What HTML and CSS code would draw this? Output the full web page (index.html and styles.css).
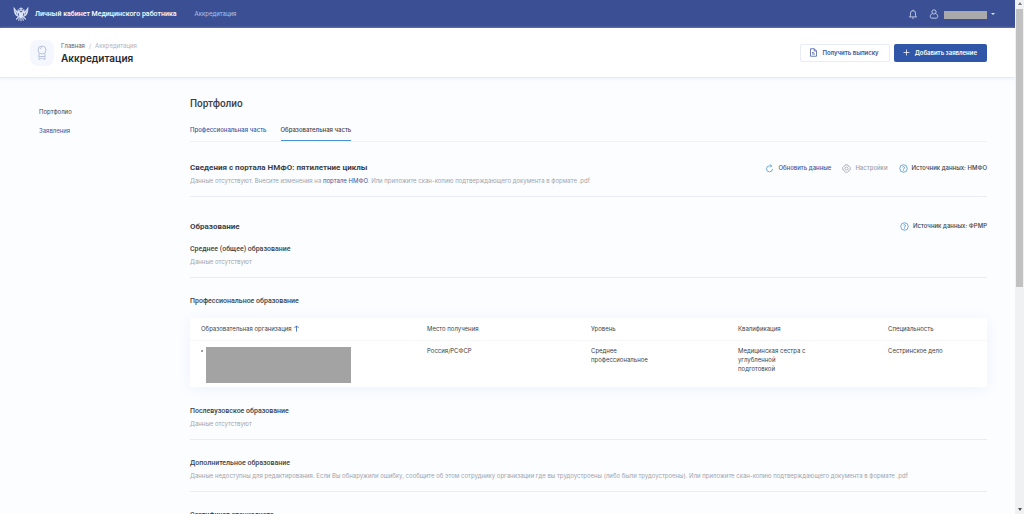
FILE: index.html
```html
<!DOCTYPE html>
<html lang="ru">
<head>
<meta charset="utf-8">
<title>Аккредитация</title>
<link rel="stylesheet" href="styles.css">
</head>
<body>
<div class="page">
  <header class="topbar">
    <svg class="emblem" viewBox="0 0 28 28" fill="none" stroke="currentColor" stroke-width="1.8" stroke-linecap="round">
      <path d="M14 3v4M11.500 5h5M9 6.500l2 2.500 3-1.500 3 1.500 2-2.500M8 9l3 2M20 9l-3 2"/>
      <path d="M11 12C7 12 5 8 2 4c0 7 1 12 7 14M17 12c4 0 6-4 9-8 0 7-1 12-7 14M5 8v5M7.500 11v5M23 8v5M20.500 11v5"/>
      <path d="M11 12h6v6l-3 3-3-3zM10 19l-4 4M18 19l4 4M14 21v5M11 21l-1 4M17 21l1 4" fill="currentColor"/>
    </svg>
    <span class="brand">Личный кабинет Медицинского работника</span>
    <nav class="topnav"><a href="#">Аккредитация</a></nav>
    <div class="user">
      <button class="icon-btn" aria-label="Уведомления">
        <svg viewBox="0 0 24 24" class="ico"><path d="M3 19h18M5 19v-2l1-2v-5a6 6 0 0 1 12 0v5l1 2v2M10 22h4M12 4V2"/></svg>
      </button>
      <button class="account" aria-label="Профиль">
        <svg viewBox="0 0 24 24" class="ico"><circle cx="12" cy="7" r="5"/><path d="M8 11c-3 1-5 4-5 7 0 3 2 4 4 4h10c2 0 4-1 4-4 0-3-2-6-5-7"/></svg>
        <span class="mask-name"></span>
        <span class="caret"></span>
      </button>
    </div>
  </header>

  <section class="titlebar">
    <span class="badge">
      <svg viewBox="0 0 24 32" class="ico"><circle cx="12" cy="10" r="8"/><path d="M8 8a5 5 0 0 1 4-3M6 17v12l6-3 6 3V17M6 23h12"/></svg>
    </span>
    <div class="titles">
      <nav class="crumbs"><a href="#">Главная</a><span>/</span><span>Аккредитация</span></nav>
      <h1>Аккредитация</h1>
    </div>
    <div class="actions">
      <button class="btn btn-light">
        <svg viewBox="0 0 24 24" class="ico"><path d="M4 2h10l6 6v14H4zM14 2v6h6M8 12h5M8 16h8"/></svg>
        Получить выписку
      </button>
      <button class="btn btn-primary">
        <svg viewBox="0 0 24 24" class="ico"><path d="M12 4v16M4 12h16"/></svg>
        Добавить заявление
      </button>
    </div>
  </section>

  <div class="body">
    <nav class="sidebar">
      <a class="current" href="#">Портфолио</a>
      <a href="#">Заявления</a>
    </nav>
    <main class="content">
      <h2>Портфолио</h2>
      <nav class="tabs">
        <a href="#">Профессиональная часть</a>
        <a class="active" href="#">Образовательная часть</a>
      </nav>

      <section class="block first">
        <div class="head">
          <h3>Сведения с портала НМФО: пятилетние циклы</h3>
          <div class="tools">
            <button class="tool refresh"><svg viewBox="0 0 24 24" class="ico"><path d="M20 13a8 8 0 1 1-8-8h5M14 1l4 4-4 4"/></svg>Обновить данные</button>
            <button class="tool muted"><svg viewBox="0 0 24 24" class="ico"><path d="M9 2h6l1 3 3 1 3 3v6l-3 1-1 3-3 3H9l-3-3-1-3-3-1V9l3-3 3-1z"/><circle cx="12" cy="12" r="4"/></svg>Настройки</button>
            <button class="tool source"><svg viewBox="0 0 24 24" class="ico"><circle cx="12" cy="12" r="10"/><path d="M9 9a3 3 0 1 1 3 4v2M12 17v2"/></svg>Источник данных: НМФО</button>
          </div>
        </div>
        <p>Данные отсутствуют. Внесите изменения на <a href="#">портале НМФО</a>. Или приложите скан-копию подтверждающего документа в формате .pdf</p>
      </section>

      <div class="head education">
        <h3>Образование</h3>
        <div class="tools">
          <button class="tool source"><svg viewBox="0 0 24 24" class="ico"><circle cx="12" cy="12" r="10"/><path d="M9 9a3 3 0 1 1 3 4v2M12 17v2"/></svg>Источник данных: ФРМР</button>
        </div>
      </div>
      <section class="block near">
        <h4>Среднее (общее) образование</h4>
        <p>Данные отсутствуют</p>
      </section>

      <section class="professional">
        <h4>Профессиональное образование</h4>
        <table>
          <thead>
            <tr>
              <th class="c-org">Образовательная организация
                <svg viewBox="0 0 16 16" class="ico sort"><path d="M8 15V2M3 7l5-5 5 5"/></svg></th>
              <th class="c-place">Место получения</th>
              <th class="c-level">Уровень</th>
              <th class="c-qual">Квалификация</th>
              <th>Специальность</th>
            </tr>
          </thead>
          <tbody>
            <tr>
              <td class="org"><div class="org-cell"><span class="dot"></span><span class="mask-org"></span></div></td>
              <td>Россия/РСФСР</td>
              <td>Среднее<br>профессиональное</td>
              <td>Медицинская сестра с<br>углубленной<br>подготовкой</td>
              <td>Сестринское дело</td>
            </tr>
          </tbody>
        </table>
      </section>

      <section class="block">
        <h4>Послевузовское образование</h4>
        <p>Данные отсутствуют</p>
      </section>
      <section class="block">
        <h4>Дополнительное образование</h4>
        <p>Данные недоступны для редактирования. Если Вы обнаружили ошибку, сообщите об этом сотруднику организации где вы трудоустроены (либо были трудоустроены). Или приложите скан-копию подтверждающего документа в формате .pdf</p>
      </section>
      <section class="block">
        <h4>Сертификат специалиста</h4>
      </section>
    </main>
  </div>
</div>
<div class="scrollbar" aria-hidden="true">
  <span class="arrow up"></span>
  <span class="thumb"></span>
  <span class="arrow down"></span>
</div>
</body>
</html>
```
FILE: styles.css
```css
* { box-sizing: border-box; }
body {
  margin: 0;
  display: flex;
  height: 100vh;
  overflow: hidden;
  background: #fcfdff;
  color: #3c3f47;
  font: 6px/12px Inter, "Noto Sans", sans-serif;
}
h1, h2, h3, h4, p { margin: 0; }
a { color: #3d559d; text-decoration: none; }
button {
  font: inherit;
  color: inherit;
  background: none;
  border: 0;
  padding: 0;
  display: flex;
  align-items: center;
}
.ico {
  width: 9px;
  height: 9px;
  flex: none;
  fill: none;
  stroke: currentColor;
  stroke-width: 2;
}

.page { flex: 1; min-width: 0; overflow: hidden; }

.topbar {
  display: flex;
  align-items: center;
  height: 28px;
  padding: 0 20px 0 13px;
  background: #3b5094;
  color: #fff;
}
.emblem { width: 16px; height: 16px; color: #dfe6fa; }
.brand { margin-left: 6px; font: 500 7px/12px Roboto, sans-serif; }
.topnav { margin-left: 18px; }
.topnav a { color: #b4c0e4; }
.user { display: flex; align-items: center; gap: 11px; margin-left: auto; color: #d5dcf1; }
.user .ico { width: 10px; height: 10px; }
.account { gap: 5px; }
.mask-name { width: 43px; height: 8px; margin-top: 2px; background: #a9a8aa; }
.caret {
  border: 2px solid transparent;
  border-top-color: #dfe5f6;
  border-bottom: 0;
  margin-left: -1px;
}

.titlebar {
  display: flex;
  align-items: center;
  height: 50px;
  padding: 0 28px 0 30px;
  background: #fff;
  border-bottom: 1px solid #e6ecf4;
  box-shadow: 0 1px 3px #eaf0f8;
}
.badge {
  display: flex;
  align-items: center;
  justify-content: center;
  width: 24px;
  height: 26px;
  border-radius: 8px;
  background: #f4f7fd;
  color: #b9c3dc;
}
.badge .ico { width: 12px; height: 16px; }
.titles { margin-left: 7px; }
.crumbs { display: flex; gap: 4px; line-height: 10px; color: #b0b3bc; }
.crumbs a { color: #5f636d; }
h1 { font-size: 10px; line-height: 14px; font-weight: 600; color: #26282f; }
.actions { display: flex; gap: 4px; margin-left: auto; }
.btn {
  height: 18px;
  padding: 0 10px 0 8px;
  gap: 4px;
  border-radius: 2px;
  font-weight: 600;
}
.btn-light { border: 1px solid #e8edf5; color: #3d559d; }
.btn-primary { background: #3056a8; color: #fff; }

.body { display: flex; padding: 18px 28px 0 39px; }
.sidebar { display: flex; flex-direction: column; gap: 7px; width: 151px; padding-top: 10px; }
.sidebar .current { color: #3c3f47; }
.content { flex: 1; min-width: 0; }

h2 { font: 500 10px/16px Roboto, sans-serif; }
.tabs { display: flex; gap: 14px; margin-top: 12px; border-bottom: 1px solid #edf1f8; }
.tabs a { padding-bottom: 4px; border-bottom: 1px solid transparent; font-weight: 500; }
.tabs .active { color: #44413f; border-color: #4c93d6; }

.head { display: flex; align-items: center; justify-content: space-between; }
h3 { font: 700 8px/14px Roboto, sans-serif; }
h4 { font: 500 7px/14px Roboto, sans-serif; }
.tools { display: flex; gap: 11px; }
.tool { gap: 4px; font-weight: 500; }
.tool .ico { color: #4a8fce; }
.refresh { color: #3d559d; }
.muted, .muted .ico { color: #9b9fa8; }

.block { padding: 16px 0 9px; border-bottom: 1px solid #e9edf3; }
.block p { color: #a0a4ad; }
.first { padding-top: 19px; }
.near { padding-top: 8px; }
.education { margin-top: 23px; align-items: flex-start; }
.professional { padding: 16px 0 1px; }

table {
  width: 100%;
  margin-top: 10px;
  border-collapse: collapse;
  table-layout: fixed;
  background: #fff;
  box-shadow: 0 2px 14px #edf2fb;
}
th { height: 22px; padding: 0; text-align: left; font-weight: 400; border-bottom: 1px solid #f4f6fa; }
td { height: 47px; padding: 5px 0 0; vertical-align: top; line-height: 9px; }
th:first-child, td:first-child { padding-left: 11px; }
.c-org { width: 237px; }
.c-place { width: 164px; }
.c-level { width: 147px; }
.c-qual { width: 150px; }
.sort { width: 7px; height: 7px; color: #3d6fb5; vertical-align: -1px; }
.org-cell { display: flex; gap: 3px; }
.dot { width: 2px; height: 2px; margin-top: 4px; border-radius: 50%; background: #7d8087; }
.mask-org { width: 145px; height: 36px; margin-top: 1px; background: #a3a3a3; }

.scrollbar {
  display: flex;
  flex-direction: column;
  align-items: center;
  width: 9px;
  background: #f0f1f2;
}
.arrow { border: 2px solid transparent; }
.up { margin-top: 2px; border-bottom: 3px solid #77787b; border-top: 0; }
.down { margin: auto 0 3px; border-top: 3px solid #505154; border-bottom: 0; }
.thumb { width: 7px; height: 278px; margin-top: 4px; background: #c1c1c2; }
```
